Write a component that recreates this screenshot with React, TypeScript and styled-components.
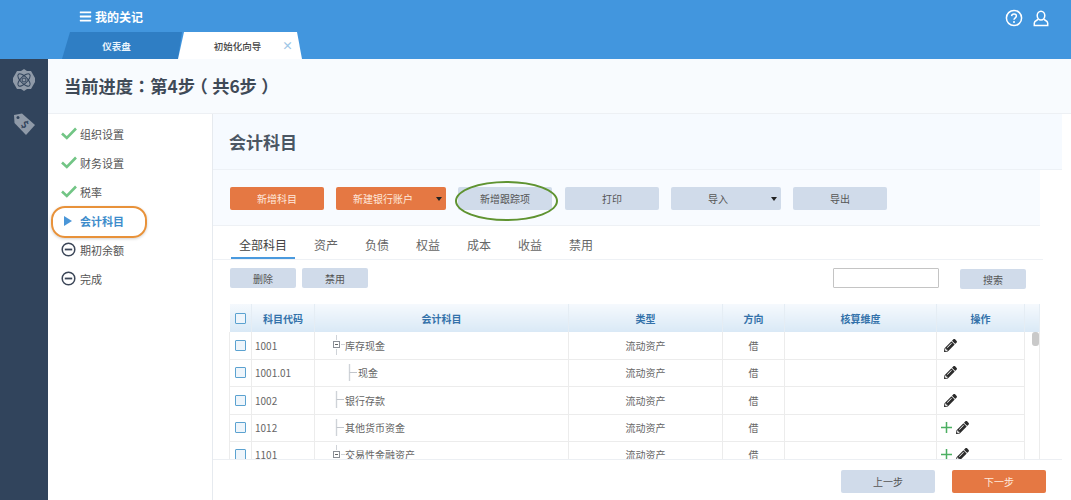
import styled, { createGlobalStyle } from 'styled-components';
import { FaBars, FaPencilAlt } from 'react-icons/fa';

const rows = [
  { code: '1001', name: '库存现金', tree: 'folder', deep: false, add: false },
  { code: '1001.01', name: '现金', tree: 'leaf', deep: true, add: false },
  { code: '1002', name: '银行存款', tree: 'leaf', deep: false, add: false },
  { code: '1012', name: '其他货币资金', tree: 'leaf', deep: false, add: true },
  { code: '1101', name: '交易性金融资产', tree: 'folder', deep: false, add: true },
];

const doneSteps = ['组织设置', '财务设置', '税率'];
const todoSteps = ['期初余额', '完成'];
const filterTabs = ['资产', '负债', '权益', '成本', '收益', '禁用'];

function CheckMark() {
  return (
    <svg width="16" height="13" viewBox="0 0 16 13">
      <path d="M1 6.5 L5.8 11 L15 1.5" fill="none" stroke="#72c585" strokeWidth="2.6" />
    </svg>
  );
}

function MinusMark() {
  return (
    <svg width="15" height="15" viewBox="0 0 15 15">
      <circle cx="7.5" cy="7.5" r="6.3" fill="none" stroke="#3b4658" strokeWidth="1.5" />
      <path d="M3.8 7.5 H11.2" stroke="#3b4658" strokeWidth="1.8" />
    </svg>
  );
}

function PlusMark() {
  return (
    <svg width="11" height="11" viewBox="0 0 11 11">
      <path d="M5.5 0 V11 M0 5.5 H11" stroke="#4caf62" strokeWidth="1.5" />
    </svg>
  );
}

function TreeMark({ kind }: { kind: string }) {
  if (kind === 'folder') {
    return (
      <svg width="13" height="20" viewBox="0 0 13 20">
        <path d="M4.5 0 V5 M4.5 14 V20 M9 9.5 H13" stroke="#cfd3d8" strokeWidth="1" />
        <rect x="1.5" y="6.5" width="6" height="6" fill="#fff" stroke="#8a8f96" strokeWidth="1" />
        <path d="M3 9.5 H6" stroke="#666" strokeWidth="1" />
      </svg>
    );
  }
  return (
    <svg width="13" height="20" viewBox="0 0 13 20">
      <path d="M4.5 1 V18" stroke="#cfd3d8" strokeWidth="1.4" />
      <path d="M4.5 9.5 H12" stroke="#c2c6cc" strokeWidth="1" />
    </svg>
  );
}

function App() {
  return (
    <>
      <GlobalStyle />
      <Page>
        <TopBar>
          <TopLeft>
            <AppTitle>
              <FaBars size={13} />
              我的关记
            </AppTitle>
            <TabStrip>
              <DarkTab>仪表盘</DarkTab>
              <LightTab>
                初始化向导
                <TabClose>×</TabClose>
              </LightTab>
            </TabStrip>
          </TopLeft>
          <TopIcons>
            <svg width="18" height="18" viewBox="0 0 18 18">
              <circle cx="9" cy="9" r="7.6" fill="none" stroke="#fff" strokeWidth="1.5" />
              <path d="M6.6 7.1 C6.8 4.4 11.4 4.5 11.4 7.1 C11.4 8.8 9 8.9 9 10.8" fill="none" stroke="#fff" strokeWidth="1.5" />
              <circle cx="9" cy="13" r="1" fill="#fff" />
            </svg>
            <svg width="16" height="17" viewBox="0 0 16 17">
              <ellipse cx="8" cy="5.6" rx="3.8" ry="4.4" fill="none" stroke="#fff" strokeWidth="1.5" />
              <path d="M5.2 9.4 C3.5 10.4 1.3 11 1.3 13 V15.6 H14.7 V13 C14.7 11 12.5 10.4 10.8 9.4" fill="none" stroke="#fff" strokeWidth="1.5" />
            </svg>
          </TopIcons>
        </TopBar>
        <Body>
          <Rail>
            <svg width="24" height="24" viewBox="0 0 24 24">
              <path d="M12 1 L15 3 L19 3 L21 6.500 L23 10 L23 14 L21 17.500 L19 21 L15 21 L12 23 L9 21 L5 21 L3 17.500 L1 14 L1 10 L3 6.500 L5 3 L9 3 Z" fill="#8f9aa8" />
              <g fill="none" stroke="#31445c" strokeWidth="1">
                <ellipse cx="12" cy="12" rx="8" ry="3.4" transform="rotate(45 12 12)" />
                <ellipse cx="12" cy="12" rx="8" ry="3.4" transform="rotate(-45 12 12)" />
                <circle cx="12" cy="12" r="2" />
              </g>
            </svg>
            <svg width="24" height="24" viewBox="0 0 24 24">
              <path d="M2 3 L10 1.500 L23 13 L14 23 L2.500 11 Z" fill="#8f9aa8" />
              <circle cx="6" cy="5.500" r="1.500" fill="#31445c" />
              <text x="12.500" y="16" fontSize="10" fontWeight="700" fill="#31445c" textAnchor="middle" transform="rotate(42 12.500 13)">$</text>
            </svg>
          </Rail>
          <Main>
            <ProgressHeader>
              当前进度：第4步<Bracket>（</Bracket>共6步<Bracket>）</Bracket>
            </ProgressHeader>
            <Split>
              <StepNav>
                {doneSteps.map((step) => (
                  <StepRow key={step}>
                    <StepIcon>
                      <CheckMark />
                    </StepIcon>
                    {step}
                  </StepRow>
                ))}
                <ActiveStep>
                  <StepIcon>
                    <ActiveArrow />
                  </StepIcon>
                  会计科目
                </ActiveStep>
                {todoSteps.map((step) => (
                  <StepRow key={step}>
                    <StepIcon>
                      <MinusMark />
                    </StepIcon>
                    {step}
                  </StepRow>
                ))}
              </StepNav>
              <Content>
                <PageTitle>会计科目</PageTitle>
                <Toolbar>
                  <ToolButton $tone="orange" $width={94}>新增科目</ToolButton>
                  <ToolButton $tone="orange" $width={110} $caret>
                    新建银行账户
                    <Caret />
                  </ToolButton>
                  <CircledButton $tone="gray" $width={94}>新增跟踪项</CircledButton>
                  <ToolButton $tone="gray" $width={94}>打印</ToolButton>
                  <ToolButton $tone="gray" $width={110} $caret>
                    导入
                    <Caret />
                  </ToolButton>
                  <ToolButton $tone="gray" $width={94}>导出</ToolButton>
                </Toolbar>
                <FilterTabs>
                  <FilterTab $active>全部科目</FilterTab>
                  {filterTabs.map((tab) => (
                    <FilterTab key={tab}>{tab}</FilterTab>
                  ))}
                </FilterTabs>
                <ActionRow>
                  <SmallButton>删除</SmallButton>
                  <SmallButton>禁用</SmallButton>
                  <SearchInput />
                  <SearchButton>搜索</SearchButton>
                </ActionRow>
                <TableWrap>
                  <AccountTable>
                    <colgroup>
                      <col width="22" />
                      <col width="63" />
                      <col width="254" />
                      <col width="154" />
                      <col width="62" />
                      <col width="152" />
                      <col width="88" />
                      <col width="15" />
                    </colgroup>
                    <thead>
                      <tr>
                        <HeadCell><CheckBox /></HeadCell>
                        <HeadCell>科目代码</HeadCell>
                        <HeadCell>会计科目</HeadCell>
                        <HeadCell>类型</HeadCell>
                        <HeadCell>方向</HeadCell>
                        <HeadCell>核算维度</HeadCell>
                        <HeadCell>操作</HeadCell>
                        <HeadCell />
                      </tr>
                    </thead>
                    <tbody>
                      {rows.map((row, i) => (
                        <tr key={row.code}>
                          <CheckCell><CheckBox /></CheckCell>
                          <CodeCell>{row.code}</CodeCell>
                          <BodyCell>
                            <TreeName $deep={row.deep}>
                              <TreeMark kind={row.tree} />
                              {row.name}
                            </TreeName>
                          </BodyCell>
                          <CenterCell>流动资产</CenterCell>
                          <CenterCell>借</CenterCell>
                          <CenterCell />
                          <BodyCell>
                            <OpsIcons $add={row.add}>
                              {row.add && <PlusMark />}
                              <FaPencilAlt size={13} color="#2b2b2b" />
                            </OpsIcons>
                          </BodyCell>
                          {i === 0 && (
                            <ScrollCell rowSpan={rows.length}>
                              <ScrollThumb />
                            </ScrollCell>
                          )}
                        </tr>
                      ))}
                    </tbody>
                  </AccountTable>
                </TableWrap>
                <Footer>
                  <ToolButton $tone="gray" $width={94}>上一步</ToolButton>
                  <ToolButton $tone="orange" $width={94}>下一步</ToolButton>
                </Footer>
              </Content>
            </Split>
          </Main>
        </Body>
      </Page>
    </>
  );
}

const GlobalStyle = createGlobalStyle`
  html, body {
    margin: 0;
    padding: 0;
    overflow: hidden;
    background: #fff;
  }

  * {
    box-sizing: border-box;
  }

  body {
    font-family: "Noto Sans CJK SC", "Noto Sans", sans-serif;
    color: #555;
  }
`;

const Page = styled.div`
  width: 1071px;
  height: 500px;
  display: flex;
  flex-direction: column;
  overflow: hidden;
`;

const TopBar = styled.header`
  height: 59px;
  flex: none;
  display: flex;
  justify-content: space-between;
  background-color: #4296de;
`;

const TopLeft = styled.div`
  display: flex;
  flex-direction: column;
`;

const AppTitle = styled.div`
  height: 32px;
  padding: 1px 0 0 79px;
  display: flex;
  align-items: center;
  gap: 3px;
  color: #fff;
  font-size: 12px;
  font-weight: 700;
`;

const TabStrip = styled.div`
  height: 27px;
  padding-left: 62px;
  display: flex;
`;

const DarkTab = styled.div`
  width: 120px;
  display: flex;
  align-items: center;
  justify-content: center;
  padding-right: 11px;
  color: #eaf4fc;
  font-size: 9.5px;
  font-weight: 700;
  background-color: #2f7ec4;
  clip-path: polygon(8px 0, 100% 0, 116px 100%, 0 100%);
`;

const LightTab = styled.div`
  position: relative;
  width: 124px;
  margin-left: -4px;
  display: flex;
  align-items: center;
  justify-content: center;
  padding-right: 5px;
  color: #444;
  font-size: 9.5px;
  font-weight: 500;
  background-color: #fff;
  clip-path: polygon(6px 0, 119px 0, 100% 100%, 0 100%);
`;

const TabClose = styled.span`
  position: absolute;
  right: 9px;
  top: 5px;
  color: #9ec6e6;
  font-size: 11px;
  font-weight: 700;
  line-height: 17px;
`;

const TopIcons = styled.div`
  height: 36px;
  padding-right: 22px;
  display: flex;
  align-items: center;
  gap: 10px;
`;

const Body = styled.div`
  flex: 1;
  min-height: 0;
  display: flex;
`;

const Rail = styled.nav`
  width: 48px;
  flex: none;
  padding-top: 9px;
  display: flex;
  flex-direction: column;
  align-items: center;
  gap: 20px;
  background-color: #31445c;
`;

const Main = styled.main`
  flex: 1;
  min-width: 0;
  display: flex;
  flex-direction: column;
`;

const ProgressHeader = styled.div`
  height: 55px;
  flex: none;
  padding: 0 0 2px 16px;
  display: flex;
  align-items: center;
  color: #3f4a57;
  font-family: "Noto Sans CJK TC", "Noto Sans CJK SC", sans-serif;
  font-size: 17.25px;
  font-weight: 700;
  background-color: #f8fbfe;
  border-bottom: 1px solid #edf0f4;
`;

const Bracket = styled.span`
  padding: 0 4.3px;
  font-feature-settings: "halt";
`;

const Split = styled.div`
  flex: 1;
  min-height: 0;
  display: flex;
`;

const StepNav = styled.div`
  width: 165px;
  flex: none;
  padding: 5px 0 0 3px;
  border-right: 1px solid #e6eaef;
`;

const StepRow = styled.div`
  position: relative;
  height: 29px;
  display: flex;
  align-items: center;
  padding-left: 10px;
  color: #555;
  font-size: 11px;
`;

const ActiveStep = styled(StepRow)`
  color: #3d8ccb;
  font-weight: 700;

  &::after {
    content: '';
    position: absolute;
    left: 0;
    top: 0;
    width: 92px;
    height: 28px;
    border: 2px solid #e8923a;
    border-radius: 14px;
    box-shadow: 0 1px 3px rgba(0, 0, 0, 0.18);
  }
`;

const StepIcon = styled.span`
  width: 19px;
  display: flex;
  align-items: center;
`;

const ActiveArrow = styled.span`
  margin-left: 3px;
  width: 0;
  height: 0;
  border-style: solid;
  border-width: 5px 0 5px 8px;
  border-color: transparent transparent transparent #4a96d8;
`;

const Content = styled.section`
  flex: 1;
  min-width: 0;
  display: flex;
  flex-direction: column;
`;

const PageTitle = styled.h1`
  height: 56px;
  flex: none;
  margin: 0 9px 0 0;
  padding: 0 0 0 16px;
  display: flex;
  align-items: center;
  color: #4b5663;
  font-size: 17px;
  font-weight: 700;
  background-color: #f6faff;
  border-bottom: 1px solid #edf1f6;
`;

const Toolbar = styled.div`
  height: 56px;
  flex: none;
  margin-right: 31px;
  padding: 17px 0 0 17px;
  display: flex;
  align-items: flex-start;
  gap: 12px;
  background-color: #f8fbff;
  border-bottom: 1px solid #eef1f5;
`;

const ToolButton = styled.button<{ $tone: string; $width: number; $caret?: boolean }>`
  position: relative;
  width: ${(props) => props.$width}px;
  height: 23px;
  padding: ${(props) => (props.$caret ? '0 16px 0 0' : '0')};
  border: 0;
  border-radius: 2px;
  font-family: inherit;
  font-size: 10px;
  color: ${(props) => (props.$tone === 'orange' ? '#ffe9dd' : '#555')};
  background-color: ${(props) => (props.$tone === 'orange' ? '#e57843' : '#d0dbea')};
`;

const CircledButton = styled(ToolButton)`
  margin-right: 1px;

  &::after {
    content: '';
    position: absolute;
    left: -3px;
    top: -6px;
    width: 99px;
    height: 36px;
    border: 2.5px solid #5f9331;
    border-radius: 50%;
  }
`;

const Caret = styled.span`
  position: absolute;
  right: 4px;
  top: 10px;
  width: 0;
  height: 0;
  border-style: solid;
  border-width: 4px 3.5px 0 3.5px;
  border-color: #222 transparent transparent transparent;
`;

const FilterTabs = styled.div`
  height: 34px;
  flex: none;
  margin-right: 28px;
  padding: 6px 0 0 18px;
  display: flex;
  gap: 11px;
  border-bottom: 1px solid #eef1f5;
`;

const FilterTab = styled.div<{ $active?: boolean }>`
  height: 27px;
  padding: 0 8px;
  display: flex;
  align-items: center;
  font-size: 12px;
  color: ${(props) => (props.$active ? '#444' : '#666')};
  border-bottom: 2px solid ${(props) => (props.$active ? '#4a9ade' : 'transparent')};
`;

const ActionRow = styled.div`
  height: 44px;
  flex: none;
  padding: 8px 0 0 17px;
  display: flex;
  align-items: flex-start;
  gap: 6px;
`;

const SmallButton = styled.button`
  width: 66px;
  height: 20px;
  padding: 0;
  border: 0;
  border-radius: 2px;
  font-family: inherit;
  font-size: 10px;
  color: #555;
  background-color: #d0dbea;
`;

const SearchInput = styled.input`
  width: 106px;
  height: 20px;
  margin-left: auto;
  padding: 0;
  border: 1px solid #c4c4c4;
  border-radius: 1px;
  background-color: #fff;
`;

const SearchButton = styled(SmallButton)`
  margin: 1px 45px 0 15px;
`;

const TableWrap = styled.div`
  flex: 1;
  min-height: 0;
  padding-left: 16px;
  overflow: hidden;
`;

const AccountTable = styled.table`
  width: 810px;
  table-layout: fixed;
  border-collapse: collapse;
  font-size: 10px;
  color: #666;

  tbody tr:nth-child(3n) td {
    height: 28px;
  }
`;

const HeadCell = styled.th`
  height: 28px;
  padding: 0;
  font-size: 10px;
  font-weight: 700;
  color: #3372aa;
  text-align: center;
  background: linear-gradient(#f5f9fd, #d9e9f6);
  border-right: 1px solid #e5edf4;
`;

const BodyCell = styled.td`
  height: 27px;
  padding: 0;
  border: 1px solid #ececec;
  border-top: 0;
`;

const CheckCell = styled(BodyCell)`
  padding: 0;
`;

const CodeCell = styled(BodyCell)`
  padding-left: 3px;
`;

const TreeName = styled.div<{ $deep: boolean }>`
  padding-left: ${(props) => (props.$deep ? 30 : 17)}px;
  display: flex;
  align-items: center;
`;

const CenterCell = styled(BodyCell)`
  text-align: center;
`;

const OpsIcons = styled.div<{ $add: boolean }>`
  padding-left: ${(props) => (props.$add ? 4 : 7)}px;
  display: flex;
  align-items: center;
  gap: 4px;
`;

const ScrollCell = styled.td`
  padding: 0 0 0 7px;
  vertical-align: top;
  border-right: 1px solid #ececec;
`;

const ScrollThumb = styled.div`
  width: 7px;
  height: 14px;
  border-radius: 3px;
  background-color: #c9c9c9;
`;

const CheckBox = styled.span`
  display: block;
  width: 11px;
  height: 11px;
  margin: 0 auto;
  border: 1px solid #5ba2d0;
  border-radius: 1px;
  background-color: #eef5fb;
`;

const Footer = styled.div`
  height: 41px;
  flex: none;
  margin-right: 9px;
  padding: 10px 16px 0 0;
  display: flex;
  justify-content: flex-end;
  gap: 17px;
  background-color: #fff;
  border-top: 1px solid #eceff3;
`;

export default App;
